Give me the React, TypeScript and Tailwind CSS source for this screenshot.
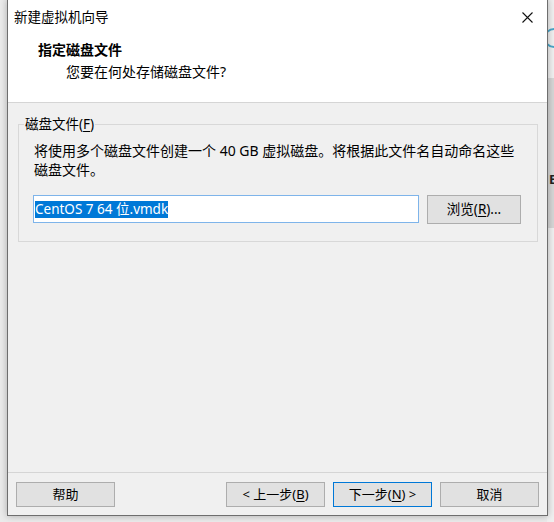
import React from "react";

const FONT = {
  fontFamily: '"Noto Sans", "Noto Sans CJK SC", sans-serif',
};

function Btn({
  children,
  primary,
  className = "",
}: {
  children: React.ReactNode;
  primary?: boolean;
  className?: string;
}) {
  return (
    <div
      className={
        "h-[25px] w-[99px] flex items-center justify-center bg-[#e1e1e1] text-[13px] text-black leading-none " +
        (primary ? "border border-[#0078d7] " : "border border-[#adadad] ") +
        className
      }
    >
      {children}
    </div>
  );
}

export default function App() {
  return (
    <div
      className="relative w-[554px] h-[522px] overflow-hidden bg-[#ebebeb]"
      style={FONT}
    >
      {/* background desktop peeking at the right */}
      <div className="absolute left-[547px] top-0 w-[7px] h-[522px] bg-[#f0f0f0]">
        <div className="absolute left-0 top-[78px] w-[7px] h-[150px] bg-[#d6d6d6]" />
        <svg
          className="absolute left-0 top-[27px]"
          width="7"
          height="22"
          viewBox="0 0 7 22"
        >
          <path
            d="M7 2 A9 9 0 0 0 7 20"
            fill="none"
            stroke="#4aa6c9"
            strokeWidth="2"
          />
        </svg>
        <div className="absolute left-[2px] top-[173px] text-[13px] font-bold text-[#222] leading-none">
          E
        </div>
      </div>

      {/* dialog window */}
      <div className="absolute left-[7px] top-[-1px] w-[541px] h-[517px] border border-[#6e6e6e] bg-[#f0f0f0] flex flex-col shadow-[0_0_7px_rgba(0,0,0,0.28)]">
        {/* header */}
        <div className="h-[103px] bg-white border-b border-[#d5d5d5] flex flex-col">
          <div className="h-[34px] flex items-center justify-between pl-[6px] pr-[14px]">
            <span className="text-[13.5px] text-black leading-[18px]">
              新建虚拟机向导
            </span>
            <svg width="11" height="11" viewBox="0 0 11 11">
              <path
                d="M0.5 0.5 L10.5 10.5 M10.5 0.5 L0.5 10.5"
                stroke="#111"
                strokeWidth="1.1"
              />
            </svg>
          </div>
          <div className="mt-[7px] pl-[30px] text-[14px] font-bold leading-[18px] text-black">
            指定磁盘文件
          </div>
          <div className="mt-[4px] pl-[58px] text-[14px] leading-[18px] text-black">
            您要在何处存储磁盘文件?
          </div>
        </div>

        {/* body */}
        <div className="flex-1 pt-[21px]">
          <div className="relative ml-[10px] mr-[9px] h-[118px] border border-[#d8d8d8]">
            <div className="absolute left-[5px] top-[-10px] px-[1px] bg-[#f0f0f0] text-[13.5px] leading-[18px] text-black">
              磁盘文件(<span className="underline underline-offset-2">F</span>)
            </div>
            <div className="pl-[15px] pr-[17px] pt-[16px] text-[14px] leading-[19px] text-black">
              将使用多个磁盘文件创建一个 40 GB 虚拟磁盘。将根据此文件名自动命名这些磁盘文件。
            </div>
            <div className="flex items-start gap-[8px] pl-[14px] mt-[16px]">
              <div className="w-[386px] h-[28px] bg-white border border-[#7eb4ea] flex items-center pl-[1px]">
                <span className="bg-[#0078d7] text-white text-[13.5px] leading-[17px]">
                  CentOS 7 64 位.vmdk
                </span>
              </div>
              <div className="w-[94px] h-[29px] flex items-center justify-center bg-[#e1e1e1] border border-[#adadad] text-[13.5px] text-black leading-none">
                浏览(<span className="underline underline-offset-2">R</span>)...
              </div>
            </div>
          </div>
        </div>

        {/* footer */}
        <div className="h-[43px] border-t border-[#d5d5d5] pt-[9px] px-[8px] flex items-start">
          <Btn>帮助</Btn>
          <div className="flex-1" />
          <div className="flex gap-[8px]">
            <Btn>
              &lt; 上一步(<span className="underline underline-offset-2">B</span>)
            </Btn>
            <Btn primary>
              下一步(<span className="underline underline-offset-2">N</span>) &gt;
            </Btn>
            <Btn>取消</Btn>
          </div>
        </div>
      </div>
    </div>
  );
}
